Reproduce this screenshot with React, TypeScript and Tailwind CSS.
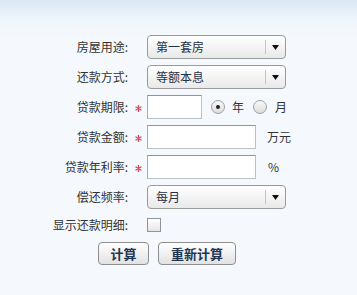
const font = { fontFamily: '"Noto Sans CJK SC", "Noto Sans", sans-serif' };

function Select({ value }: { value: string }) {
  return (
    <div className="flex h-[24px] w-[139px] items-center rounded-[4px] border border-[#9a9a9a] bg-gradient-to-b from-white to-[#e9e9e9] shadow-[inset_0_1px_0_#fff]">
      <span className="flex-1 pl-[8px] text-[12px] leading-none text-[#22344a]">{value}</span>
      <span className="h-[14px] w-px bg-[#c4c4c4]" />
      <span className="flex w-[19px] justify-center">
        <svg width="7" height="5" viewBox="0 0 7 5">
          <path d="M0 0h7L3.5 5z" fill="#111" />
        </svg>
      </span>
    </div>
  );
}

function TextBox({ w }: { w: string }) {
  return (
    <div
      className={`h-[24px] ${w} border border-[#b9c0c8] border-t-[#8f959c] border-l-[#a4aab1] bg-white`}
    />
  );
}

function Radio({ checked }: { checked?: boolean }) {
  return (
    <span className="flex h-[14px] w-[14px] items-center justify-center rounded-full border border-[#9aa0a6] bg-gradient-to-b from-[#fafafa] to-[#dcdcdc]">
      {checked && <span className="h-[4px] w-[4px] rounded-full bg-[#222]" />}
    </span>
  );
}

function Star() {
  return (
    <svg width="7" height="7" viewBox="0 0 7 7" className="mt-[2px]">
      <g stroke="#e2455c" strokeWidth="1.3">
        <path d="M3.5 0v7M0.5 1.8l6 3.4M0.5 5.2l6-3.4" />
      </g>
    </svg>
  );
}

function Row({
  label,
  star,
  children,
}: {
  label: string;
  star?: boolean;
  children: React.ReactNode;
}) {
  return (
    <div className="flex h-[24px] items-center">
      <div className="w-[128px] text-right text-[12px] leading-none text-[#333]">{label}</div>
      <div className="flex w-[19px] justify-center pl-[1px]">{star && <Star />}</div>
      {children}
    </div>
  );
}

export default function App() {
  return (
    <div
      className="h-[295px] w-[357px] bg-[linear-gradient(to_bottom,#dbe8f5,#f1f6fb_22px,#f5f9fd_40px,#f5f9fd)] pt-[35px]"
      style={font}
    >
      <div className="flex flex-col gap-[6px]">
        <Row label="房屋用途:">
          <Select value="第一套房" />
        </Row>
        <Row label="还款方式:">
          <Select value="等额本息" />
        </Row>
        <Row label="贷款期限:" star>
          <TextBox w="w-[55px]" />
          <span className="ml-[9px]">
            <Radio checked />
          </span>
          <span className="ml-[7px] text-[12px] leading-none text-[#333]">年</span>
          <span className="ml-[9px]">
            <Radio />
          </span>
          <span className="ml-[8px] text-[12px] leading-none text-[#333]">月</span>
        </Row>
        <Row label="贷款金额:" star>
          <TextBox w="w-[109px]" />
          <span className="ml-[11px] text-[12px] leading-none text-[#333]">万元</span>
        </Row>
        <Row label="贷款年利率:" star>
          <TextBox w="w-[109px]" />
          <span className="ml-[12px] text-[12px] leading-none text-[#333]">%</span>
        </Row>
        <Row label="偿还频率:">
          <Select value="每月" />
        </Row>
      </div>
      <div className="mt-[6px] flex h-[20px] items-center">
        <div className="w-[128px] text-right text-[12px] leading-none text-[#333]">显示还款明细:</div>
        <span className="ml-[19px] h-[14px] w-[14px] border border-[#8f959c] bg-gradient-to-b from-white to-[#e6e6e6]" />
      </div>
      <div className="mt-[7px] flex gap-[9px] pl-[98px]">
        <button className="h-[23px] w-[51px] rounded-[4px] border border-[#8e8e8e] bg-gradient-to-b from-white to-[#e2e2e2] text-[13px] font-bold leading-none text-[#1d3550]">
          计算
        </button>
        <button className="h-[23px] w-[78px] rounded-[4px] border border-[#8e8e8e] bg-gradient-to-b from-white to-[#e2e2e2] text-[13px] font-bold leading-none text-[#1d3550]">
          重新计算
        </button>
      </div>
    </div>
  );
}
